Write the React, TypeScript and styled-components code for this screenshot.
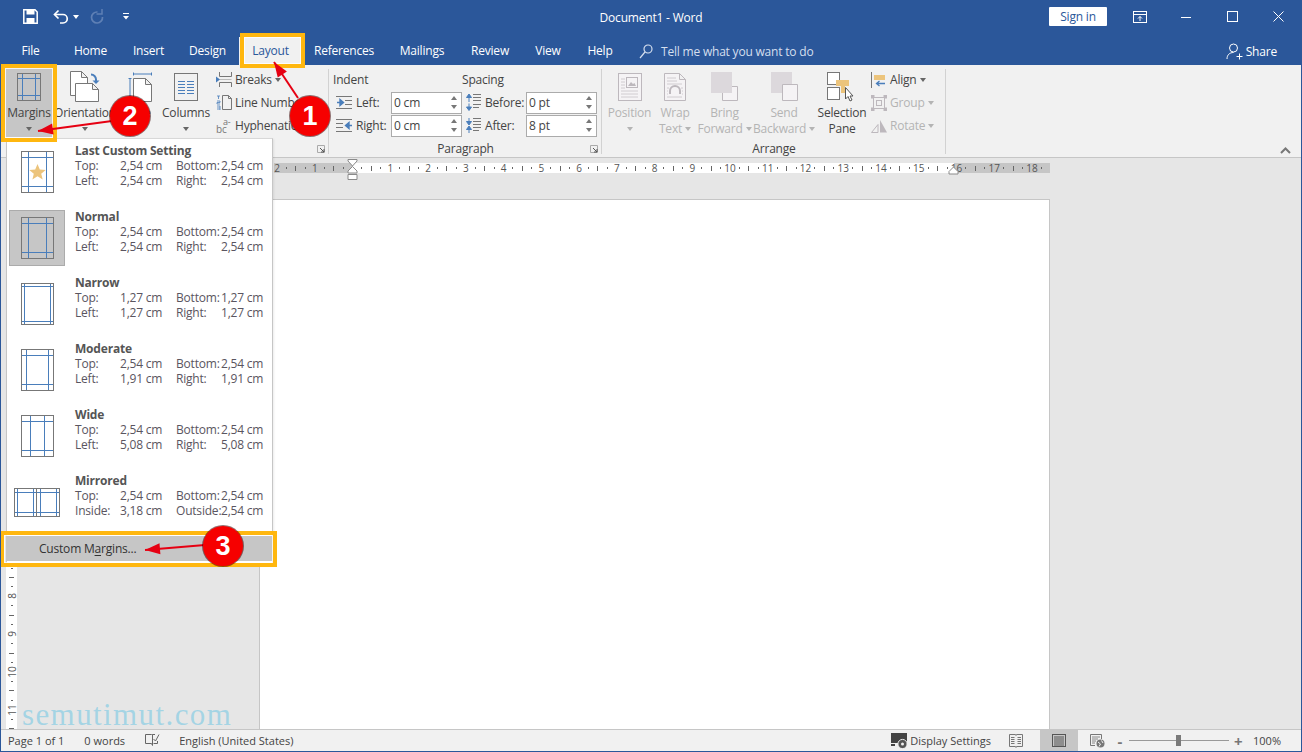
import React from 'react';
import styled, { createGlobalStyle } from 'styled-components';

const BLUE = '#2b579a';
const ICON_BLUE = '#4a7ebb';
const ICON_GRAY = '#777777';
const ORANGE = '#ffb70f';

const GlobalStyle = createGlobalStyle`
  html, body { margin: 0; padding: 0; background: #fff; }
  * { box-sizing: border-box; }
  body { font-family: "Open Sans", "Noto Sans", "Liberation Sans", sans-serif; font-size: 12px; letter-spacing: -0.2px; color: #444; }
`;

const Window = styled.div`
  position: relative;
  width: 1302px;
  height: 752px;
  border: 1px solid ${BLUE};
  display: flex;
  flex-direction: column;
  overflow: hidden;
`;

/* title bar */
const TitleBar = styled.header`
  height: 31px;
  flex: none;
  background: ${BLUE};
  color: #fff;
  display: grid;
  grid-template-columns: 1fr auto 1fr;
  align-items: center;
`;
const QuickAccess = styled.div`
  display: flex;
  align-items: center;
  padding-left: 22px;
`;
const QuickButton = styled.div<{ $ml?: number }>`
  display: flex;
  align-items: center;
  margin-left: ${p => p.$ml || 0}px;
`;
const DocTitle = styled.div`
  font-size: 12px;
  margin-top: 1px;
`;
const WindowControls = styled.div`
  display: flex;
  align-items: center;
  justify-content: flex-end;
`;
const SignIn = styled.div`
  width: 58px;
  height: 19px;
  background: #fff;
  color: ${BLUE};
  border-radius: 1px;
  display: flex;
  align-items: center;
  justify-content: center;
  margin-right: 10px;
`;
const ControlCell = styled.div`
  width: 46px;
  height: 31px;
  display: flex;
  align-items: center;
  justify-content: center;
`;

/* tabs */
const TabBar = styled.nav`
  height: 33px;
  flex: none;
  background: ${BLUE};
  color: #fff;
  display: flex;
  align-items: flex-end;
`;
const Tab = styled.div<{ $w: number; $active?: boolean }>`
  width: ${p => p.$w}px;
  height: 28px;
  display: flex;
  align-items: center;
  justify-content: center;
  padding-bottom: 1px;
  background: ${p => (p.$active ? '#f1f1f1' : 'transparent')};
  color: ${p => (p.$active ? BLUE : '#fff')};
`;
const TellMe = styled.div`
  height: 28px;
  margin-left: 13px;
  display: flex;
  align-items: center;
  gap: 8px;
  color: #d5dfee;
`;
const Share = styled.div`
  height: 28px;
  margin-left: auto;
  padding-right: 24px;
  display: flex;
  align-items: center;
  gap: 3px;
`;

/* ribbon */
const Ribbon = styled.section`
  height: 93px;
  flex: none;
  background: #f1f1f1;
  border-bottom: 1px solid #c6c6c6;
  display: flex;
`;
const Group = styled.div<{ $w: number }>`
  width: ${p => p.$w}px;
  flex: none;
  display: flex;
  flex-direction: column;
  position: relative;
  padding-top: 3px;
  &::after {
    content: '';
    position: absolute;
    right: 0;
    top: 4px;
    bottom: 3px;
    width: 1px;
    background: #d2d2d2;
  }
`;
const GroupBody = styled.div<{ $pl: number; $gap?: number }>`
  height: 73px;
  display: flex;
  padding-left: ${p => p.$pl}px;
  gap: ${p => p.$gap || 0}px;
`;
const GroupFooter = styled.div`
  height: 16px;
  line-height: 16px;
  text-align: center;
  color: #444;
  position: relative;
`;
const Launcher = styled.svg`
  position: absolute;
  right: 4px;
  top: 4px;
`;
const LargeButton = styled.div<{ $w: number; $active?: boolean; $disabled?: boolean }>`
  width: ${p => p.$w}px;
  height: 69px;
  flex: none;
  display: flex;
  flex-direction: column;
  align-items: center;
  background: ${p => (p.$active ? '#c6c6c6' : 'transparent')};
  color: ${p => (p.$disabled ? '#b4b4b4' : '#444')};
`;
const LargeIcon = styled.div`
  height: 38px;
  display: flex;
  align-items: center;
  justify-content: center;
`;
const LabelLine = styled.div`
  height: 16px;
  line-height: 16px;
  display: flex;
  align-items: center;
  justify-content: center;
  gap: 3px;
  white-space: nowrap;
`;
const Caret = styled.span<{ $disabled?: boolean }>`
  width: 0;
  height: 0;
  flex: none;
  border-left: 3.5px solid transparent;
  border-right: 3.5px solid transparent;
  border-top: 4px solid ${p => (p.$disabled ? '#b4b4b4' : '#666')};
`;
const SmallColumn = styled.div<{ $ml: number }>`
  margin-left: ${p => p.$ml}px;
  display: flex;
  flex-direction: column;
`;
const SmallButton = styled.div<{ $disabled?: boolean }>`
  height: 23px;
  display: flex;
  align-items: center;
  gap: 3px;
  white-space: nowrap;
  color: ${p => (p.$disabled ? '#b4b4b4' : '#444')};
`;
const ParagraphColumn = styled.div<{ $w: number }>`
  width: ${p => p.$w}px;
  flex: none;
`;
const ParagraphTitle = styled.div`
  height: 23px;
  line-height: 23px;
`;
const SpinRow = styled.div<{ $label: number }>`
  height: 23px;
  display: grid;
  grid-template-columns: ${p => p.$label}px 71px;
  padding-left: 3px;
  align-items: center;
`;
const SpinLabel = styled.div`
  display: flex;
  align-items: center;
  gap: 3px;
`;
const SpinBox = styled.div`
  height: 22px;
  background: #fff;
  border: 1px solid #ababab;
  display: flex;
  align-items: center;
  justify-content: space-between;
  padding: 0 4px 0 2px;
  color: #444;
`;
const Spinner = styled.div`
  display: flex;
  flex-direction: column;
  gap: 5px;
`;
const SpinArrow = styled.span<{ $up?: boolean }>`
  display: block;
  width: 0;
  height: 0;
  border-left: 3px solid transparent;
  border-right: 3px solid transparent;
  ${p => (p.$up ? 'border-bottom: 4px solid #777;' : 'border-top: 4px solid #777;')}
`;
const Collapse = styled.div`
  margin-left: auto;
  align-self: flex-end;
  padding: 0 10px 3px 0;
  display: flex;
`;

/* document area */
const Workspace = styled.main`
  flex: 1;
  min-height: 0;
  background: #e6e6e6;
  display: flex;
`;
const VerticalRuler = styled.div`
  width: 11px;
  margin: 41px 0 0 5px;
  flex: none;
  overflow: hidden;
  background: linear-gradient(to bottom, #c6c6c6 96px, #fff 96px);
  display: flex;
  flex-direction: column;
`;
const DocColumn = styled.div`
  flex: 1;
  display: flex;
  flex-direction: column;
`;
const HorizontalRuler = styled.div`
  position: relative;
  width: 776px;
  height: 10px;
  flex: none;
  margin: 5px 0 0 257px;
  background: linear-gradient(to right, #c6c6c6 79px, #fff 79px, #fff 680px, #c6c6c6 680px);
  display: flex;
`;
const RulerClip = styled.div`
  display: flex;
  overflow: hidden;
  width: 100%;
  height: 100%;
  padding-left: 0;
`;
const RulerCell = styled.div<{ $vertical?: boolean; $lead?: number }>`
  flex: none;
  ${p => (p.$vertical ? 'height: 9.45px; width: 100%;' : 'width: 9.45px; height: 100%;')}
  ${p => (p.$lead ? (p.$vertical ? `margin-top: ${p.$lead}px;` : `margin-left: ${p.$lead}px;`) : '')}
  display: flex;
  align-items: center;
  justify-content: center;
  font-size: 10px;
  line-height: 10px;
  letter-spacing: 0;
  color: #555;
  white-space: nowrap;
`;
const RulerNumber = styled.span<{ $vertical?: boolean }>`
  ${p => (p.$vertical ? 'transform: rotate(-90deg);' : '')}
`;
const Tick = styled.span<{ $w: number; $h: number }>`
  display: block;
  width: ${p => p.$w}px;
  height: ${p => p.$h}px;
  background: #666;
`;
const IndentMarker = styled.svg<{ $x: number }>`
  position: absolute;
  left: ${p => p.$x}px;
  top: -4px;
`;
const Page = styled.div`
  width: 791px;
  flex: 1;
  margin: 26px 0 0 242px;
  background: #fff;
  border: 1px solid #c6c6c6;
  border-bottom: none;
`;

/* status bar */
const StatusBar = styled.footer`
  height: 22px;
  flex: none;
  background: #f1f1f1;
  border-top: 1px solid #c6c6c6;
  display: flex;
  align-items: center;
  padding-left: 7px;
  font-size: 11px;
  letter-spacing: 0;
  color: #444;
`;
const StatusText = styled.span<{ $ml?: number }>`
  margin-left: ${p => p.$ml || 0}px;
  white-space: nowrap;
`;
const StatusRight = styled.div`
  margin-left: auto;
  height: 100%;
  display: flex;
  align-items: center;
`;
const ViewButton = styled.div<{ $w: number; $active?: boolean }>`
  width: ${p => p.$w}px;
  height: 100%;
  display: flex;
  align-items: center;
  justify-content: center;
  background: ${p => (p.$active ? '#c6c6c6' : 'transparent')};
`;
const ZoomTrack = styled.div`
  position: relative;
  width: 100px;
  height: 1px;
  margin: 0 5px;
  background: #999;
`;
const ZoomThumb = styled.span`
  position: absolute;
  left: 47px;
  top: -5px;
  width: 5px;
  height: 11px;
  background: #7a7a7a;
`;
const ZoomSign = styled.span`
  width: 8px;
  text-align: center;
  font-size: 15px;
  font-weight: 700;
  color: #777;
`;

/* dropdown and tutorial marks, both painted over the window */
const Overlay = styled.div`
  position: absolute;
  left: -1px;
  top: -1px;
  width: 1302px;
  height: 752px;
  pointer-events: none;
`;
const Menu = styled.div`
  position: absolute;
  left: 6px;
  top: 138px;
  width: 267px;
  height: 427px;
  background: #fff;
  border: 1px solid #c6c6c6;
  border-top-color: #d8d8d8;
  padding-top: 4px;
  box-shadow: 1px 1px 2px rgba(0, 0, 0, 0.08);
`;
const MenuList = styled.div`
  height: 393px;
`;
const MenuItem = styled.div`
  height: 66px;
  display: flex;
  padding-left: 2px;
  gap: 10px;
`;
const MenuThumb = styled.div<{ $selected?: boolean }>`
  width: 56px;
  height: 56px;
  margin-top: 1px;
  flex: none;
  display: flex;
  align-items: center;
  justify-content: center;
  background: ${p => (p.$selected ? '#c6c6c6' : 'transparent')};
  border: 1px solid ${p => (p.$selected ? '#ababab' : 'transparent')};
`;
const MenuGrid = styled.div`
  display: grid;
  grid-template-columns: 45px 56px 45px 50px;
  grid-auto-rows: 15px;
  line-height: 15px;
  color: #5a5560;
  white-space: nowrap;
`;
const MenuTitle = styled.div`
  grid-column: 1 / -1;
  font-weight: 700;
  color: #555;
`;
const MenuFooter = styled.div`
  height: 25px;
  margin: 0 -1px;
  background: #c6c6c6;
  display: flex;
  align-items: center;
  padding-left: 33px;
  color: #333;
  u { text-underline-offset: 2px; }
`;
const HighlightBox = styled.div<{ $x: number; $y: number; $w: number; $h: number }>`
  position: absolute;
  left: ${p => p.$x}px;
  top: ${p => p.$y}px;
  width: ${p => p.$w}px;
  height: ${p => p.$h}px;
  border: 4px solid ${ORANGE};
  box-shadow: inset 0 0 0 1px rgba(255, 255, 255, 0.8);
`;
const ArrowLayer = styled.svg`
  position: absolute;
  left: 0;
  top: 0;
`;
const Badge = styled.div<{ $x: number; $y: number }>`
  position: absolute;
  left: ${p => p.$x - 20}px;
  top: ${p => p.$y - 20}px;
  width: 40px;
  height: 40px;
  border-radius: 50%;
  background: #f60000;
  box-shadow: 0 0 0 1px rgba(60, 0, 0, 0.55);
  color: #fff;
  font-family: "Liberation Sans", sans-serif;
  font-size: 27px;
  font-weight: 700;
  letter-spacing: 0;
  display: flex;
  align-items: center;
  justify-content: center;
`;
const Watermark = styled.div`
  position: absolute;
  left: 22px;
  top: 695px;
  font-family: "Liberation Serif", serif;
  font-size: 31px;
  line-height: 40px;
  letter-spacing: 1.4px;
  color: rgba(120, 200, 228, 0.6);
`;

/* drawings */
const fold = (x: number, y: number, w: number, h: number, f = 6) =>
  `M${x} ${y}H${x + w - f}L${x + w} ${y + f}V${y + h}H${x}ZM${x + w - f} ${y}V${y + f}H${x + w}`;

const MarginIcon = ({ w, h, l, r, t, b, star }: { w: number; h: number; l: number; r: number; t: number; b: number; star?: boolean }) => (
  <svg width={w + 1} height={h + 1} fill="none">
    <path d={`M${l + 0.5} 1V${h}M${w - r + 0.5} 1V${h}M1 ${t + 0.5}H${w}M1 ${h - b + 0.5}H${w}`} stroke={ICON_BLUE} />
    <rect x="0.5" y="0.5" width={w} height={h} stroke={ICON_GRAY} />
    {star && <path d="M16.5 13l2.3 5.5 5.9.4-4.5 3.8 1.5 5.7-5.2-3.1-5.1 3.1 1.4-5.7-4.5-3.8 5.9-.4z" fill="#ecc47c" />}
  </svg>
);

const MirroredIcon = () => (
  <svg width="46" height="29" fill="none">
    <path d="M3.5 1V28M19.5 1V28M26.5 1V28M42.5 1V28M1 4.5H45M1 24.5H45" stroke={ICON_BLUE} />
    <rect x="0.5" y="0.5" width="45" height="28" stroke={ICON_GRAY} />
    <path d="M22.5 1V28" stroke={ICON_GRAY} />
  </svg>
);

const SaveIcon = () => (
  <svg width="15" height="15" fill="none">
    <path d="M.8.8H12L14.2 3V14.2H.8Z" stroke="#fff" strokeWidth="1.5" />
    <rect x="3.5" y="1" width="8" height="4.5" fill="#fff" />
    <rect x="3.5" y="9" width="8" height="5" fill="#fff" />
  </svg>
);
const UndoIcon = () => (
  <svg width="16" height="16" fill="none">
    <path d="M5.5 1.5L1.5 5.5L5.5 9.5" stroke="#fff" strokeWidth="1.7" />
    <path d="M2 5.5H10A4.2 4.2 0 0 1 10 14H7" stroke="#fff" strokeWidth="1.7" />
  </svg>
);
const RedoIcon = () => (
  <svg width="14" height="15" fill="none">
    <path d="M7.5 3A5.5 5.5 0 1 0 12.5 8" stroke="#5f80b5" strokeWidth="1.7" />
    <path d="M8 .5V6H2.5" stroke="#5f80b5" strokeWidth="1.5" transform="translate(4 -1)" />
  </svg>
);
const CustomizeIcon = () => (
  <svg width="6" height="7">
    <path d="M0 .5H6" stroke="#fff" />
    <path d="M0 3H6L3 6.5Z" fill="#fff" />
  </svg>
);
const RibbonDisplayIcon = () => (
  <svg width="14" height="12" fill="none" stroke="#fff">
    <rect x=".5" y=".5" width="13" height="11" />
    <path d="M.5 3.5H13.5" />
    <path d="M7 10V5.5M5 7.5L7 5.5L9 7.5" />
  </svg>
);
const SearchIcon = () => (
  <svg width="14" height="15" fill="none" stroke="#d5dfee" strokeWidth="1.2">
    <circle cx="9" cy="5" r="4" />
    <path d="M6 8L1 14" />
  </svg>
);
const ShareIcon = () => (
  <svg width="17" height="17" fill="none" stroke="#fff">
    <circle cx="7.5" cy="5" r="4" />
    <path d="M1 16C1 12 3.500 9.500 7.500 9.500M10.500 13.500H16.500M13.500 10.500V16.500" />
  </svg>
);
const OrientationIcon = () => (
  <svg width="30" height="31" fill="none">
    <path d={fold(0.5, 0.5, 17, 24)} fill="#fff" stroke={ICON_GRAY} />
    <path d={fold(5.5, 12.5, 23, 18)} fill="#fff" stroke={ICON_GRAY} />
    <path d="M21 3.500A5 5 0 0 1 26 8.500V10" stroke={ICON_BLUE} strokeWidth="2" />
    <path d="M22.500 9.500H29.500L26 13Z" fill={ICON_BLUE} />
  </svg>
);
const SizeIcon = () => (
  <svg width="24" height="30" fill="none">
    <path d={fold(5.5, 6.5, 18, 23)} fill="#fff" stroke={ICON_GRAY} />
    <path d="M5.500 .5V3.500M23.500 .5V3.500M5.500 2H23.500M.5 6.500H3.500M.5 29.500H3.500M2 6.500V29.500" stroke={ICON_BLUE} />
  </svg>
);
const ColumnsIcon = () => (
  <svg width="25" height="28" fill="none">
    <rect x=".5" y=".5" width="23" height="27" stroke={ICON_GRAY} />
    <path d="M4 8.500H11M13 8.500H20M4 11.500H11M13 11.500H20M4 14.500H11M13 14.500H20M4 17.500H11M13 17.500H20M4 20.500H11M13 20.500H20" stroke={ICON_BLUE} />
  </svg>
);
const BreaksIcon = () => (
  <svg width="16" height="15" fill="none">
    <path d="M3.500 0V4.500H15.500V0M3.500 15V10.500H15.500V15" stroke={ICON_GRAY} />
    <path d="M3.500 7.500H15.500" stroke="#bbb" />
    <path d="M0 4.500L4 7.500L0 10.500Z" fill={ICON_BLUE} />
  </svg>
);
const LineNumbersIcon = () => (
  <svg width="16" height="15" fill="none">
    <path d="M1 1H4M2.500 1V4M1 6H4V7.500H1V9H4M1 11H4V13H1M4 13V15H1" stroke={ICON_BLUE} strokeWidth=".8" />
    <path d={fold(6.5, 0.5, 9, 14, 3)} stroke={ICON_GRAY} />
  </svg>
);
const HyphenationIcon = () => (
  <svg width="16" height="16" fill={ICON_GRAY}>
    <text x="7" y="7" fontSize="9" fontFamily="Open Sans">a-</text>
    <text x="0" y="15" fontSize="10" fontFamily="Open Sans">bc</text>
  </svg>
);
const IndentIcon = ({ right }: { right?: boolean }) => (
  <svg width="17" height="13" fill="none">
    <path d={right ? 'M0 .5H16M0 4.500H7M0 8.500H7M0 12.500H16' : 'M0 .5H16M9 4.500H16M9 8.500H16M0 12.500H16'} stroke={ICON_GRAY} />
    {right
      ? <path d="M16 6.500H11M13 3.500L9.500 6.500L13 9.500Z" stroke={ICON_BLUE} fill={ICON_BLUE} strokeWidth="1.400" />
      : <path d="M1 6.500H6M4 3.500L7.500 6.500L4 9.500Z" stroke={ICON_BLUE} fill={ICON_BLUE} strokeWidth="1.400" />}
  </svg>
);
const SpacingIcon = ({ after }: { after?: boolean }) => (
  <svg width="17" height="17" fill="none">
    <path d="M8 1.500H16M8 4.500H16M8 7.500H16" stroke={ICON_GRAY} transform={after ? 'translate(0 0)' : 'translate(0 -1)'} />
    <path d="M8 10.500H16M8 13.500H14" stroke={ICON_GRAY} />
    <path d={after ? 'M4 1V6M1.500 4.500L4 8L6.500 4.500ZM4 16V11M1.500 12.500L4 9L6.500 12.500Z' : 'M4 8V2M1.500 3.500L4 0L6.500 3.500ZM4 9.500V14M1.500 13L4 16.500L6.500 13Z'} stroke={ICON_BLUE} fill={ICON_BLUE} />
  </svg>
);
const PositionIcon = () => (
  <svg width="24" height="28" fill="none">
    <rect x=".5" y=".5" width="23" height="27" fill="#f5f3f5" stroke="#bdb8bd" />
    <rect x="8.500" y="4.500" width="11" height="10" stroke="#bdb8bd" />
    <path d="M10 13L13 9L15 11L16.500 10L18 13Z" fill="#bdb8bd" />
    <path d="M3 6H7M3 9H7M3 12H7M3 15H7M3 18H20M3 21H20M3 24H20" stroke="#d0ccd0" />
  </svg>
);
const WrapTextIcon = () => (
  <svg width="22" height="28" fill="none">
    <path d={fold(0.5, 0.5, 21, 27)} fill="#f5f3f5" stroke="#bdb8bd" />
    <path d="M3 5H12M3 8H13M3 11H18" stroke="#d0ccd0" />
    <path d="M6 21V18A5 5 0 0 1 16 18V21" stroke="#bdb8bd" strokeWidth="2" />
    <path d="M3 15H5M17 15H19M3 18H4M18 18H19M3 21H4M18 21H19M3 24H18" stroke="#d0ccd0" />
  </svg>
);
const ForwardIcon = () => (
  <svg width="27" height="29" fill="none">
    <path d="M11.500 14.500H26.500V28.500H11.500Z" fill="#f5f3f5" stroke="#bdb8bd" />
    <rect x="0" y="0" width="21" height="21" fill="#dcd8dc" />
  </svg>
);
const BackwardIcon = () => (
  <svg width="27" height="29" fill="none">
    <rect x="0" y="0" width="21" height="21" fill="#dcd8dc" />
    <path d="M11.500 12.500H26.500V28.500H11.500Z" fill="#f5f3f5" stroke="#bdb8bd" />
  </svg>
);
const SelectionIcon = () => (
  <svg width="30" height="30" fill="none">
    <rect x=".5" y=".5" width="12" height="12" fill="#fff" stroke={ICON_GRAY} />
    <rect x=".5" y="15.500" width="12" height="12" fill="#fff" stroke={ICON_GRAY} />
    <path d="M9 8H22V14H18V21H14V14H9Z" fill="#ecc47c" />
    <path d="M18.500 15.500V27L21 24.500L23 29L25 28L23 24H26Z" fill="#fff" stroke="#555" />
  </svg>
);
const AlignIcon = () => (
  <svg width="16" height="16" fill="none">
    <path d="M.5 0V16" stroke={ICON_GRAY} />
    <rect x="3" y="3" width="11" height="5" fill="#ecc47c" />
    <path d="M14 11.500H6M8.500 9L5.500 11.500L8.500 14" stroke={ICON_BLUE} strokeWidth="1.300" />
  </svg>
);
const GroupIcon = () => (
  <svg width="16" height="16" fill="none" stroke="#bdb8bd">
    <rect x="2.500" y="2.500" width="11" height="11" />
    <rect x="5.500" y="5.500" width="5" height="5" />
    <path d="M0 0H3V3H0ZM13 0H16V3H13ZM0 13H3V16H0ZM13 13H16V16H13Z" fill="#bdb8bd" />
  </svg>
);
const RotateIcon = () => (
  <svg width="16" height="14" fill="none">
    <path d="M.5 13.500L7 5.500V13.500Z" stroke="#bdb8bd" />
    <path d="M9 1V13.500H16Z" fill="#bdb8bd" />
  </svg>
);
const LauncherIcon = () => (
  <Launcher width="8" height="8" fill="none">
    <path d="M.5 7.500V.5H7.500V7.500Z" stroke="#aaa" />
    <path d="M3 3L7 7M4 7H7V4" stroke="#555" />
  </Launcher>
);
const ProofIcon = () => (
  <svg width="15" height="13" fill="none" stroke="#666">
    <path d="M6.500 1.500H.5V10.500H6.500L7.500 12.500V1.500ZM7.500 1.500H10" />
    <path d="M8.500 6L10.500 8L14 1.500" />
    <path d="M12.500 8V10.500H8.500" />
  </svg>
);
const DisplaySettingsIcon = () => (
  <svg width="17" height="16">
    <rect x="0" y="0" width="16" height="10" fill="#444" />
    <path d="M0 12H4" stroke="#444" strokeWidth="2" />
    <circle cx="11.500" cy="11" r="4.600" fill="#555" stroke="#f1f1f1" />
    <circle cx="11.500" cy="11" r="1.500" fill="#f1f1f1" />
  </svg>
);
const ReadModeIcon = () => (
  <svg width="14" height="14" fill="none" stroke="#777">
    <path d="M.5 .5H6.500L7 1.500L7.500 .5H13.500V12.500H7.500L7 13.500L6.500 12.500H.5Z" />
    <path d="M2 3.500H5.500M2 5.500H5.500M2 7.500H5.500M2 9.500H5.500M8.500 3.500H12M8.500 5.500H12M8.500 7.500H12M8.500 9.500H12" />
  </svg>
);
const PrintLayoutIcon = () => (
  <svg width="14" height="14" fill="none" stroke="#555">
    <rect x=".5" y=".5" width="13" height="12" />
    <path d="M2 3H12M2 5H12M2 7H12M2 9H12M2 11H12" />
  </svg>
);
const WebLayoutIcon = () => (
  <svg width="15" height="14" fill="none">
    <path d="M.5 .5H11.500V5M5 11.500H.5V.5" stroke="#777" />
    <path d="M2 3H10M2 5H8M2 7H6M2 9H5" stroke="#888" />
    <circle cx="10.500" cy="9.500" r="4" fill="#777" />
    <path d="M8 8L10.500 10L9 12.500M11.500 6.500L13 9" stroke="#f1f1f1" />
  </svg>
);

type Arrow = [number, number, number, number];
const ARROWS: Arrow[] = [
  [298, 98, 274, 62],
  [112, 121, 38, 131],
  [205, 545, 145, 550],
];
const arrowHead = ([x1, y1, x2, y2]: Arrow) => {
  const len = Math.hypot(x2 - x1, y2 - y1);
  const dx = (x2 - x1) / len;
  const dy = (y2 - y1) / len;
  const bx = x2 - dx * 15;
  const by = y2 - dy * 15;
  return `${x2},${y2} ${bx - dy * 5.5},${by + dx * 5.5} ${bx + dy * 5.5},${by - dx * 5.5}`;
};

const TABS: [string, number][] = [
  ['File', 59], ['Home', 61], ['Insert', 55], ['Design', 63], ['Layout', 63],
  ['References', 84], ['Mailings', 72], ['Review', 64], ['View', 52], ['Help', 52],
];

const PRESETS = [
  { name: 'Last Custom Setting', rows: [['Top:', '2,54 cm', 'Bottom:', '2,54 cm'], ['Left:', '2,54 cm', 'Right:', '2,54 cm']], icon: <MarginIcon w={32} h={41} l={7} r={7} t={6} b={6} star /> },
  { name: 'Normal', selected: true, rows: [['Top:', '2,54 cm', 'Bottom:', '2,54 cm'], ['Left:', '2,54 cm', 'Right:', '2,54 cm']], icon: <MarginIcon w={32} h={41} l={7} r={7} t={6} b={6} /> },
  { name: 'Narrow', rows: [['Top:', '1,27 cm', 'Bottom:', '1,27 cm'], ['Left:', '1,27 cm', 'Right:', '1,27 cm']], icon: <MarginIcon w={32} h={41} l={3} r={3} t={3} b={3} /> },
  { name: 'Moderate', rows: [['Top:', '2,54 cm', 'Bottom:', '2,54 cm'], ['Left:', '1,91 cm', 'Right:', '1,91 cm']], icon: <MarginIcon w={32} h={41} l={5} r={5} t={6} b={6} /> },
  { name: 'Wide', rows: [['Top:', '2,54 cm', 'Bottom:', '2,54 cm'], ['Left:', '5,08 cm', 'Right:', '5,08 cm']], icon: <MarginIcon w={32} h={41} l={9} r={9} t={6} b={6} /> },
  { name: 'Mirrored', rows: [['Top:', '2,54 cm', 'Bottom:', '2,54 cm'], ['Inside:', '3,18 cm', 'Outside:', '2,54 cm']], icon: <MirroredIcon /> },
];

const Ruler = ({ from, to, lead, vertical }: { from: number; to: number; lead: number; vertical?: boolean }) => {
  const cells = [];
  for (let q = from; q <= to; q++) {
    const frac = ((q % 4) + 4) % 4;
    let mark: React.ReactNode = null;
    if (frac === 0) mark = q !== 0 && <RulerNumber $vertical={vertical}>{Math.abs(q / 4)}</RulerNumber>;
    else if (frac === 2) mark = vertical ? <Tick $w={5} $h={1} /> : <Tick $w={1} $h={5} />;
    else mark = vertical ? <Tick $w={2} $h={1} /> : <Tick $w={1} $h={2} />;
    cells.push(<RulerCell key={q} $vertical={vertical} $lead={q === from ? lead : 0}>{mark}</RulerCell>);
  }
  return <>{cells}</>;
};

export default function App() {
  return (
    <>
      <GlobalStyle />
      <Window>
        <TitleBar>
          <QuickAccess>
            <QuickButton><SaveIcon /></QuickButton>
            <QuickButton $ml={15}><UndoIcon /></QuickButton>
            <QuickButton $ml={4}><Caret style={{ borderTopColor: '#fff' }} /></QuickButton>
            <QuickButton $ml={11}><RedoIcon /></QuickButton>
            <QuickButton $ml={19}><CustomizeIcon /></QuickButton>
          </QuickAccess>
          <DocTitle>Document1 - Word</DocTitle>
          <WindowControls>
            <SignIn>Sign in</SignIn>
            <ControlCell><RibbonDisplayIcon /></ControlCell>
            <ControlCell><svg width="10" height="10" stroke="#fff"><path d="M0 5.500H10" /></svg></ControlCell>
            <ControlCell><svg width="11" height="11" fill="none" stroke="#fff"><rect x=".5" y=".5" width="10" height="10" /></svg></ControlCell>
            <ControlCell><svg width="11" height="11" stroke="#fff"><path d="M.5 .5L10.500 10.500M10.500 .5L.5 10.500" /></svg></ControlCell>
          </WindowControls>
        </TitleBar>

        <TabBar>
          {TABS.map(([name, w]) => <Tab key={name} $w={w} $active={name === 'Layout'}>{name}</Tab>)}
          <TellMe><SearchIcon />Tell me what you want to do</TellMe>
          <Share><ShareIcon />Share</Share>
        </TabBar>

        <Ribbon>
          <Group $w={328}>
            <GroupBody $pl={4} $gap={2}>
              <LargeButton $w={48} $active>
                <LargeIcon><MarginIcon w={23} h={27} l={5} r={5} t={5} b={5} /></LargeIcon>
                <LabelLine>Margins</LabelLine>
                <LabelLine><Caret /></LabelLine>
              </LargeButton>
              <LargeButton $w={60}>
                <LargeIcon><OrientationIcon /></LargeIcon>
                <LabelLine>Orientation</LabelLine>
                <LabelLine><Caret /></LabelLine>
              </LargeButton>
              <LargeButton $w={46}>
                <LargeIcon><SizeIcon /></LargeIcon>
                <LabelLine>Size</LabelLine>
                <LabelLine><Caret /></LabelLine>
              </LargeButton>
              <LargeButton $w={42}>
                <LargeIcon><ColumnsIcon /></LargeIcon>
                <LabelLine>Columns</LabelLine>
                <LabelLine><Caret /></LabelLine>
              </LargeButton>
              <SmallColumn $ml={7}>
                <SmallButton><BreaksIcon />Breaks<Caret /></SmallButton>
                <SmallButton><LineNumbersIcon />Line Numbers<Caret /></SmallButton>
                <SmallButton><HyphenationIcon />Hyphenation<Caret /></SmallButton>
              </SmallColumn>
            </GroupBody>
            <GroupFooter>Page Setup<LauncherIcon /></GroupFooter>
          </Group>

          <Group $w={273}>
            <GroupBody $pl={4}>
              <ParagraphColumn $w={129}>
                <ParagraphTitle>Indent</ParagraphTitle>
                <SpinRow $label={55}>
                  <SpinLabel><IndentIcon />Left:</SpinLabel>
                  <SpinBox>0 cm<Spinner><SpinArrow $up /><SpinArrow /></Spinner></SpinBox>
                </SpinRow>
                <SpinRow $label={55}>
                  <SpinLabel><IndentIcon right />Right:</SpinLabel>
                  <SpinBox>0 cm<Spinner><SpinArrow $up /><SpinArrow /></Spinner></SpinBox>
                </SpinRow>
              </ParagraphColumn>
              <ParagraphColumn $w={135}>
                <ParagraphTitle>Spacing</ParagraphTitle>
                <SpinRow $label={61}>
                  <SpinLabel><SpacingIcon />Before:</SpinLabel>
                  <SpinBox>0 pt<Spinner><SpinArrow $up /><SpinArrow /></Spinner></SpinBox>
                </SpinRow>
                <SpinRow $label={61}>
                  <SpinLabel><SpacingIcon after />After:</SpinLabel>
                  <SpinBox>8 pt<Spinner><SpinArrow $up /><SpinArrow /></Spinner></SpinBox>
                </SpinRow>
              </ParagraphColumn>
            </GroupBody>
            <GroupFooter>Paragraph<LauncherIcon /></GroupFooter>
          </Group>

          <Group $w={344}>
            <GroupBody $pl={5}>
              <LargeButton $w={45} $disabled>
                <LargeIcon><PositionIcon /></LargeIcon>
                <LabelLine>Position</LabelLine>
                <LabelLine><Caret $disabled /></LabelLine>
              </LargeButton>
              <LargeButton $w={46} $disabled>
                <LargeIcon><WrapTextIcon /></LargeIcon>
                <LabelLine>Wrap</LabelLine>
                <LabelLine>Text<Caret $disabled /></LabelLine>
              </LargeButton>
              <LargeButton $w={53} $disabled>
                <LargeIcon><ForwardIcon /></LargeIcon>
                <LabelLine>Bring</LabelLine>
                <LabelLine>Forward<Caret $disabled /></LabelLine>
              </LargeButton>
              <LargeButton $w={66} $disabled>
                <LargeIcon><BackwardIcon /></LargeIcon>
                <LabelLine>Send</LabelLine>
                <LabelLine>Backward<Caret $disabled /></LabelLine>
              </LargeButton>
              <LargeButton $w={50}>
                <LargeIcon><SelectionIcon /></LargeIcon>
                <LabelLine>Selection</LabelLine>
                <LabelLine>Pane</LabelLine>
              </LargeButton>
              <SmallColumn $ml={4}>
                <SmallButton><AlignIcon />Align<Caret /></SmallButton>
                <SmallButton $disabled><GroupIcon />Group<Caret $disabled /></SmallButton>
                <SmallButton $disabled><RotateIcon />Rotate<Caret $disabled /></SmallButton>
              </SmallColumn>
            </GroupBody>
            <GroupFooter>Arrange</GroupFooter>
          </Group>

          <Collapse>
            <svg width="11" height="7" fill="none" stroke="#777" strokeWidth="2"><path d="M1 6L5.500 1.500L10 6" /></svg>
          </Collapse>
        </Ribbon>

        <Workspace>
          <VerticalRuler>
            <Ruler from={-10} to={47} lead={-3.7} vertical />
          </VerticalRuler>
          <DocColumn>
            <HorizontalRuler>
              <RulerClip>
                <Ruler from={-8} to={73} lead={-1.7} />
              </RulerClip>
              <IndentMarker $x={73} width="11" height="21" fill="#fff" stroke="#8a8a8a">
                <path d="M1 .5H10V2L5.500 7L1 2ZM5.500 7.500L10 12V14H1V12ZM1 15.500H10V20.500H1Z" />
              </IndentMarker>
              <IndentMarker $x={674} width="11" height="21" fill="#fff" stroke="#8a8a8a">
                <path d="M5.500 8L10 12.500V15H1V12.500Z" />
              </IndentMarker>
            </HorizontalRuler>
            <Page />
          </DocColumn>
        </Workspace>

        <StatusBar>
          <StatusText>Page 1 of 1</StatusText>
          <StatusText $ml={20}>0 words</StatusText>
          <StatusText $ml={20}><ProofIcon /></StatusText>
          <StatusText $ml={19}>English (United States)</StatusText>
          <StatusRight>
            <DisplaySettingsIcon />
            <StatusText $ml={2}>Display Settings</StatusText>
            <ViewButton $w={49}><ReadModeIcon /></ViewButton>
            <ViewButton $w={38} $active><PrintLayoutIcon /></ViewButton>
            <ViewButton $w={38}><WebLayoutIcon /></ViewButton>
            <ZoomSign>-</ZoomSign>
            <ZoomTrack><ZoomThumb /></ZoomTrack>
            <ZoomSign>+</ZoomSign>
            <StatusText $ml={11} style={{ marginRight: 20 }}>100%</StatusText>
          </StatusRight>
        </StatusBar>

        <Overlay>
          <Menu>
            <MenuList>
              {PRESETS.map(preset => (
                <MenuItem key={preset.name}>
                  <MenuThumb $selected={preset.selected}>{preset.icon}</MenuThumb>
                  <MenuGrid>
                    <MenuTitle>{preset.name}</MenuTitle>
                    {preset.rows.flat().map((cell, i) => <span key={i}>{cell}</span>)}
                  </MenuGrid>
                </MenuItem>
              ))}
            </MenuList>
            <MenuFooter><span>Custom M<u>a</u>rgins...</span></MenuFooter>
          </Menu>

          <HighlightBox $x={240} $y={33} $w={65} $h={35} />
          <HighlightBox $x={1} $y={64} $w={56} $h={78} />
          <HighlightBox $x={0} $y={531} $w={277} $h={36} />

          <ArrowLayer width="1302" height="752">
            {ARROWS.map(a => (
              <g key={a[0]} fill="#e60012" stroke="#e60012">
                <line x1={a[0]} y1={a[1]} x2={a[2]} y2={a[3]} strokeWidth="2" />
                <polygon points={arrowHead(a)} strokeWidth="0" />
              </g>
            ))}
          </ArrowLayer>
          <Badge $x={310} $y={116}>1</Badge>
          <Badge $x={130} $y={116}>2</Badge>
          <Badge $x={223} $y={546}>3</Badge>

          <Watermark>semutimut.com</Watermark>
        </Overlay>
      </Window>
    </>
  );
}
